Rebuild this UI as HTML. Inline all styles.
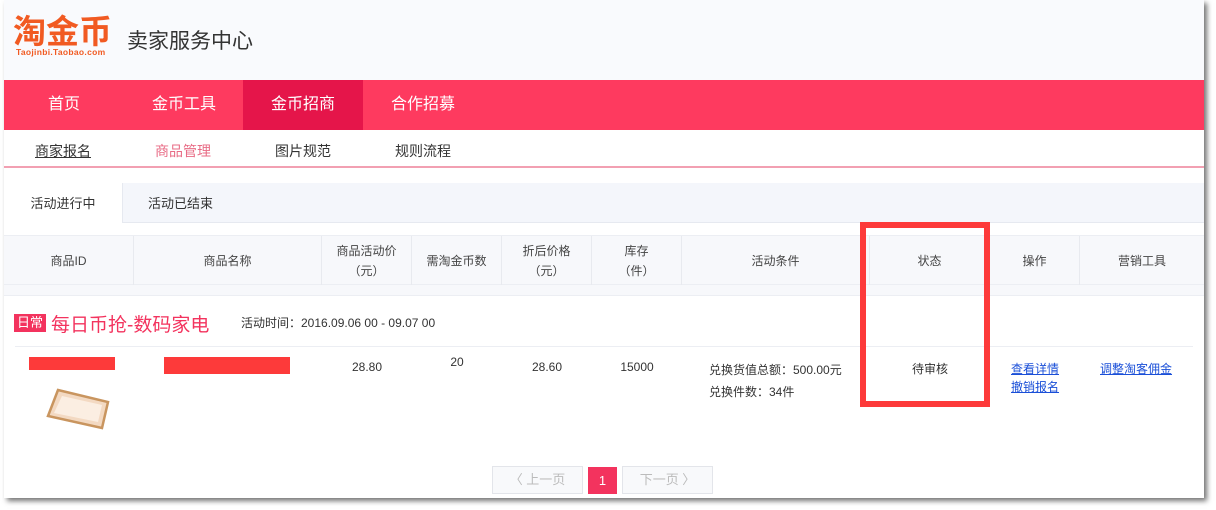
<!DOCTYPE html>
<html><head><meta charset="utf-8"><style>
*{margin:0;padding:0;box-sizing:border-box}
body{width:1216px;height:510px;background:#fff;font-family:"Liberation Sans","Noto Sans CJK SC",sans-serif;position:relative;overflow:hidden;color:#333}
.pg{position:absolute;left:4px;top:0;width:1200px;height:498px;background:#fff;box-shadow:3px 3px 5px rgba(0,0,0,.55)}
.abs{position:absolute}
.hdr{left:0;top:0;width:1200px;height:80px;background:#f9fafd}
.nav{left:0;top:80px;width:1200px;height:50px;background:#fe3a5f}
.nav div{position:absolute;top:0;height:50px;line-height:50px;color:#fff;font-size:16px;text-align:center}
.sub{top:130px;height:38px;width:1200px;border-bottom:2px solid #f2a0b2}
.sub span{position:absolute;top:11px;font-size:14px}
.tabs{top:183px;height:40px;width:1200px;background:#f4f6fb;border-bottom:1px solid #e6e9f0}
.th{top:235px;height:50px;width:1200px;background:#f7f8fb;border-top:1px solid #eceef3;border-bottom:1px solid #eceef3}
.th div{position:absolute;top:0;height:50px;border-right:1px solid #e8eaef;display:flex;align-items:center;justify-content:center;text-align:center;font-size:12px;color:#444;line-height:20px}
.c{font-size:12px;color:#333;text-align:center}
a{color:#1a4fd8;text-decoration:underline}
</style></head><body>
<div class="pg">
<div class="abs hdr"></div>
<div class="abs" style="left:9px;top:14px;font-size:33px;line-height:36px;font-weight:bold;color:#f15a22">淘金币</div>
<div class="abs" style="left:12px;top:47px;font-size:8.5px;font-weight:bold;color:#f15a22;letter-spacing:.3px">Taojinbi.Taobao.com</div>
<div class="abs" style="left:123px;top:25px;font-size:21px;color:#333">卖家服务中心</div>
<div class="abs nav">
<div style="left:0;width:120px">首页</div>
<div style="left:120px;width:120px">金币工具</div>
<div style="left:239px;width:120px;background:#e5154a">金币招商</div>
<div style="left:359px;width:120px">合作招募</div>
</div>
<div class="abs sub">
<span style="left:31px;text-decoration:underline">商家报名</span>
<span style="left:151px;color:#e86b85">商品管理</span>
<span style="left:271px">图片规范</span>
<span style="left:391px">规则流程</span>
</div>
<div class="abs tabs">
<div class="abs" style="left:0;top:0;width:119px;height:40px;background:#fff;border-right:1px solid #e6e9f0;text-align:center;line-height:42px;font-size:13px">活动进行中</div>
<div class="abs" style="left:144px;top:0;line-height:42px;font-size:13px">活动已结束</div>
</div>
<div class="abs th">
<div style="left:0;width:130px">商品ID</div>
<div style="left:130px;width:188px">商品名称</div>
<div style="left:318px;width:90px">商品活动价<br>（元）</div>
<div style="left:408px;width:90px">需淘金币数</div>
<div style="left:498px;width:90px">折后价格<br>（元）</div>
<div style="left:588px;width:90px">库存<br>（件）</div>
<div style="left:678px;width:188px">活动条件</div>
<div style="left:866px;width:120px">状态</div>
<div style="left:986px;width:90px">操作</div>
<div style="left:1076px;width:124px;border-right:none">营销工具</div>
</div>
<div class="abs" style="top:285px;left:0;width:1200px;height:11px;background:#f7f8fb;border-bottom:1px solid #eceef3"></div>
<div class="abs" style="left:10px;top:314px;width:32px;height:18px;background:#f3335e;color:#fff;font-size:13px;text-align:center;line-height:18px">日常</div>
<div class="abs" style="left:47px;top:310px;font-size:19px;color:#f3335e">每日币抢-数码家电</div>
<div class="abs" style="left:237px;top:314px;font-size:12px">活动时间：2016.09.06 00 - 09.07 00</div>
<div class="abs" style="left:11px;top:346px;width:1178px;border-top:1px solid #eceef3"></div>
<div class="abs" style="left:25px;top:357px;width:86px;height:13px;background:#fd3a3a"></div>
<div class="abs" style="left:160px;top:357px;width:126px;height:17px;background:#fd3a3a"></div>
<svg class="abs" style="left:40px;top:388px" width="66" height="44"><polygon points="14,2 64,14 58,40 4,28" fill="#f3d9c2" stroke="#c9955f" stroke-width="2.5"/><polygon points="18,8 58,17 54,34 10,25" fill="#fbeee2"/></svg>
<div class="abs c" style="left:318px;top:360px;width:90px">28.80</div>
<div class="abs c" style="left:408px;top:355px;width:90px">20</div>
<div class="abs c" style="left:498px;top:360px;width:90px">28.60</div>
<div class="abs c" style="left:588px;top:360px;width:90px">15000</div>
<div class="abs" style="left:705px;top:359px;font-size:12px;line-height:22px">兑换货值总额：500.00元<br>兑换件数：34件</div>
<div class="abs c" style="left:866px;top:360px;width:120px">待审核</div>
<div class="abs" style="left:1007px;top:360px;font-size:12px;line-height:18px"><a>查看详情</a><br><a>撤销报名</a></div>
<div class="abs" style="left:1096px;top:360px;font-size:12px"><a>调整淘客佣金</a></div>
<div class="abs" style="left:856px;top:222px;width:130px;height:185px;border:6px solid #fd3a3a"></div>
<div class="abs" style="left:488px;top:466px;width:91px;height:28px;border:1px solid #e3e5ea;background:#f8f9fb;color:#bbb;font-size:13px;text-align:center;line-height:26px">〈 上一页</div>
<div class="abs" style="left:584px;top:467px;width:29px;height:27px;background:#f3335e;color:#fff;font-size:13px;text-align:center;line-height:27px">1</div>
<div class="abs" style="left:618px;top:466px;width:91px;height:28px;border:1px solid #e3e5ea;background:#f8f9fb;color:#bbb;font-size:13px;text-align:center;line-height:26px">下一页 〉</div>
</div>
</body></html>
